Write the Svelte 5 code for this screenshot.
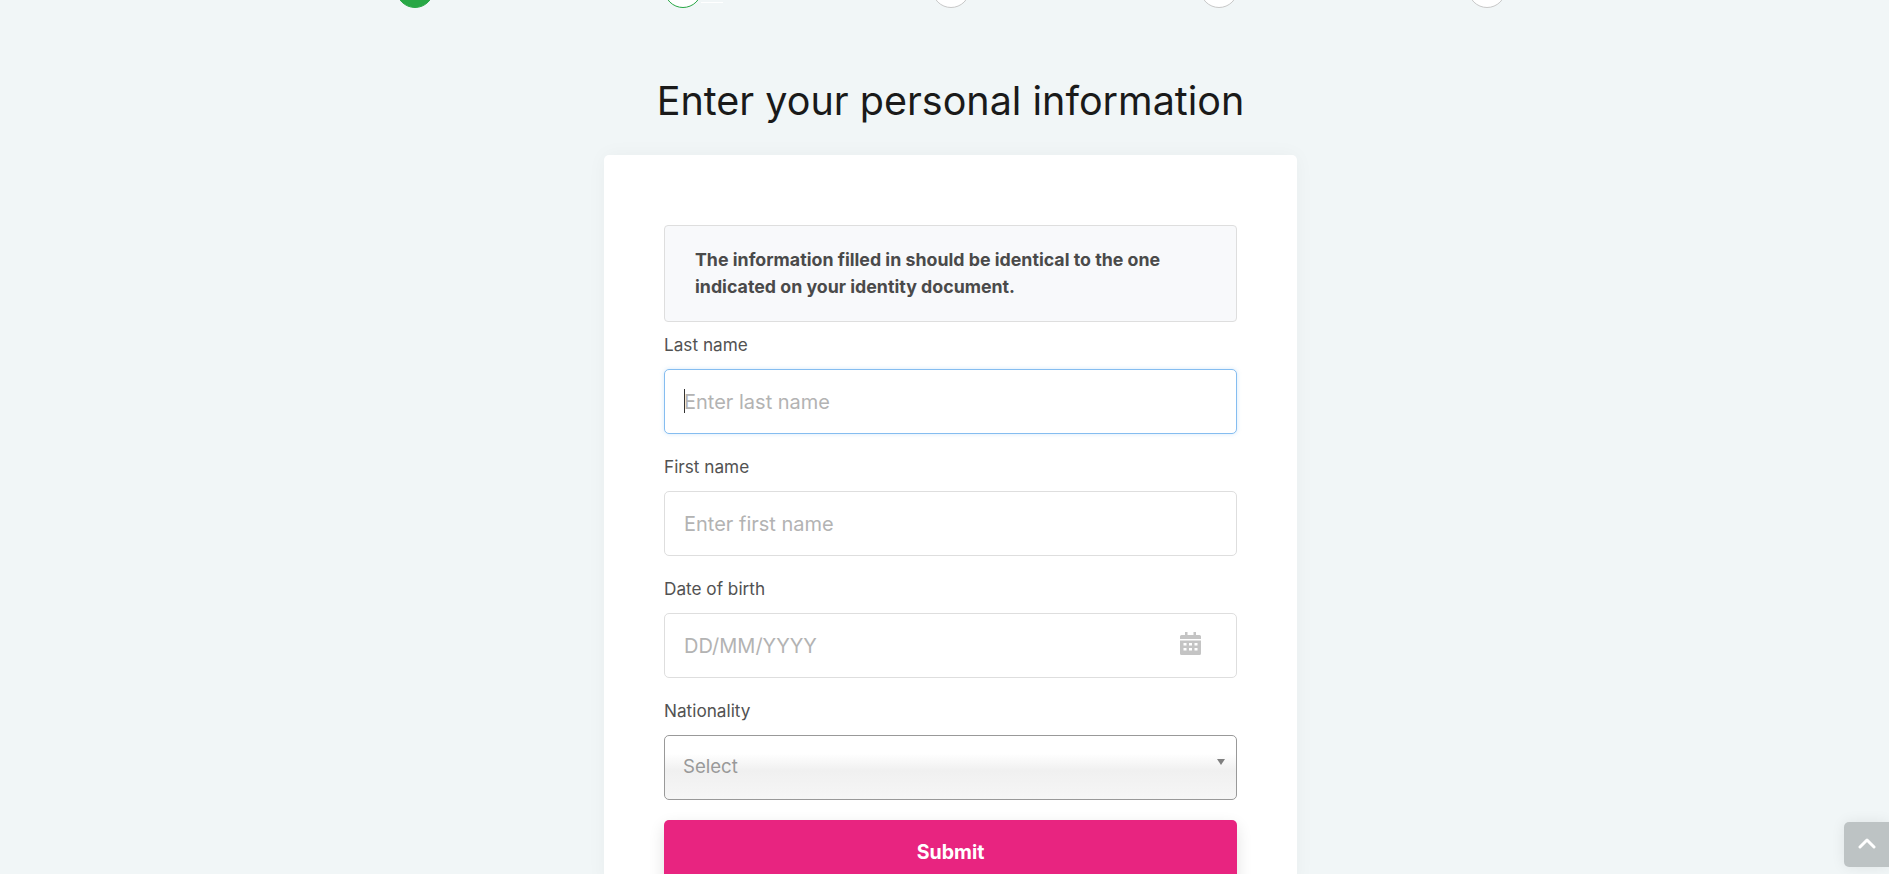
<script>
  let steps = [
    { state: "done" },
    { state: "current" },
    { state: "todo" },
    { state: "todo" },
    { state: "todo" }
  ];
</script>

<div class="page">
  <div class="steps">
    {#each steps as step}
      <div class="step step--{step.state}"></div>
    {/each}
  </div>

  <h1>Enter your personal information</h1>

  <div class="card">
    <div class="notice">
      The information filled in should be identical to the one indicated on your identity document.
    </div>

    <form>
      <div class="field">
        <label for="last">Last name</label>
        <div class="control">
          <input id="last" class="focused" type="text" placeholder="Enter last name" />
          <span class="caret"></span>
        </div>
      </div>

      <div class="field">
        <label for="first">First name</label>
        <div class="control">
          <input id="first" type="text" placeholder="Enter first name" />
        </div>
      </div>

      <div class="field">
        <label for="dob">Date of birth</label>
        <div class="control">
          <input id="dob" type="text" placeholder="DD/MM/YYYY" />
          <svg class="calendar" viewBox="0 0 21 23" aria-hidden="true">
            <path fill="#c4c4c4" d="M5 0h2.500v3h6V0H16v3h3.500A1.500 1.500 0 0 1 21 4.500V7H0V4.500A1.500 1.500 0 0 1 1.500 3H5zM0 8.500h21v13a1.500 1.500 0 0 1-1.500 1.500h-18A1.500 1.500 0 0 1 0 21.500z" />
            <path fill="#fff" d="M3.500 11h3v2.500h-3zM9 11h3v2.500H9zM14.500 11h3v2.500h-3zM3.500 16h3v2.500h-3zM9 16h3v2.500H9zM14.500 16h3v2.500h-3z" />
          </svg>
        </div>
      </div>

      <div class="field field--last">
        <label for="nat">Nationality</label>
        <div class="control">
          <select id="nat">
            <option>Select</option>
          </select>
          <span class="arrow"></span>
        </div>
      </div>

      <button type="button" class="submit">Submit</button>
    </form>
  </div>

  <button type="button" class="totop" aria-label="Back to top">
    <svg viewBox="0 0 18 11" aria-hidden="true">
      <path d="M2 9l7-7 7 7" fill="none" stroke="#fff" stroke-width="3" stroke-linecap="round" stroke-linejoin="round" />
    </svg>
  </button>
</div>

<style>
  :global(body) {
    margin: 0;
    overflow: hidden;
    background: #f1f6f7;
    font-family: Inter, "Liberation Sans", sans-serif;
  }

  .page {
    height: 874px;
    overflow: hidden;
    box-sizing: border-box;
    padding-left: 12px;
    display: flex;
    flex-direction: column;
    align-items: center;
  }

  .steps {
    display: flex;
    gap: 230px;
    margin-top: -30px;
  }

  .step {
    position: relative;
    width: 38px;
    height: 38px;
    box-sizing: border-box;
    border-radius: 50%;
    border: 1px solid #c8c8c8;
    background: #fff;
  }

  .step--done {
    background: #28a745;
    border-color: #28a745;
  }

  .step--current {
    border-color: #28a745;
  }

  .step--current::after {
    content: "";
    position: absolute;
    left: 100%;
    top: 31px;
    width: 22px;
    height: 1px;
    background: #fff;
  }

  h1 {
    margin: 62px 0 0;
    height: 62px;
    line-height: 62px;
    font-size: 39.5px;
    font-weight: 400;
    color: #1a1a1a;
  }

  .card {
    width: 693px;
    box-sizing: border-box;
    margin-top: 23px;
    padding: 70px 60px 0;
    background: #fff;
    border-radius: 5px;
    box-shadow: 0 0 20px rgba(0, 0, 0, 0.04);
    flex: 1;
  }

  .notice {
    box-sizing: border-box;
    height: 97px;
    padding: 20px 30px;
    line-height: 27px;
    font-size: 17.8px;
    font-weight: 700;
    color: #4a4a4a;
    background: #f8f9fb;
    border: 1px solid #dedede;
    border-radius: 4px;
  }

  .field {
    margin-bottom: 21px;
  }

  .field--last {
    margin-bottom: 20px;
  }

  label {
    display: block;
    height: 47px;
    line-height: 46px;
    font-size: 17.2px;
    color: #525252;
  }

  .field:not(:first-child) label {
    height: 36px;
    line-height: 24px;
  }

  .control {
    position: relative;
  }

  input,
  select {
    display: block;
    width: 100%;
    height: 65px;
    box-sizing: border-box;
    font-family: inherit;
    font-size: 20px;
    color: #333;
    background: #fff;
    border: 1px solid #dedede;
    border-radius: 5px;
    padding: 0 19px;
    outline: none;
  }

  input::placeholder {
    color: #b3b3b3;
    opacity: 1;
  }

  .focused {
    border-color: #85bdf0;
    box-shadow: 0 0 4px rgba(133, 189, 240, 0.35);
  }

  .caret {
    position: absolute;
    left: 20px;
    top: 20px;
    width: 1px;
    height: 24px;
    background: #333;
  }

  .calendar {
    position: absolute;
    right: 36px;
    top: 19px;
    width: 21px;
    height: 23px;
  }

  select {
    appearance: none;
    padding: 0 18px 3px;
    font-size: 18.6px;
    color: #999;
    border-color: #999;
    background: linear-gradient(#fff 0, #fff 28%, #f0f0f0 55%, #f6f6f6 100%);
  }

  .arrow {
    position: absolute;
    right: 12px;
    top: 24px;
    border-left: 4px solid transparent;
    border-right: 4px solid transparent;
    border-top: 6px solid #808080;
  }

  .submit {
    display: block;
    width: 100%;
    height: 65px;
    padding: 0 0 2px;
    border: 0;
    border-radius: 5px;
    background: #e82480;
    color: #fff;
    font-family: inherit;
    font-size: 19.6px;
    font-weight: 700;
    box-shadow: 0 6px 16px rgba(0, 0, 0, 0.12);
  }

  .totop {
    position: fixed;
    right: 0;
    bottom: 7px;
    width: 45px;
    height: 45px;
    padding: 0 0 2px;
    border: 0;
    border-radius: 5px 0 0 5px;
    background: #bdc3c4;
    box-shadow: 0 0 14px rgba(0, 0, 0, 0.08);
    display: flex;
    align-items: center;
    justify-content: center;
  }

  .totop svg {
    width: 18px;
    height: 11px;
  }
</style>
